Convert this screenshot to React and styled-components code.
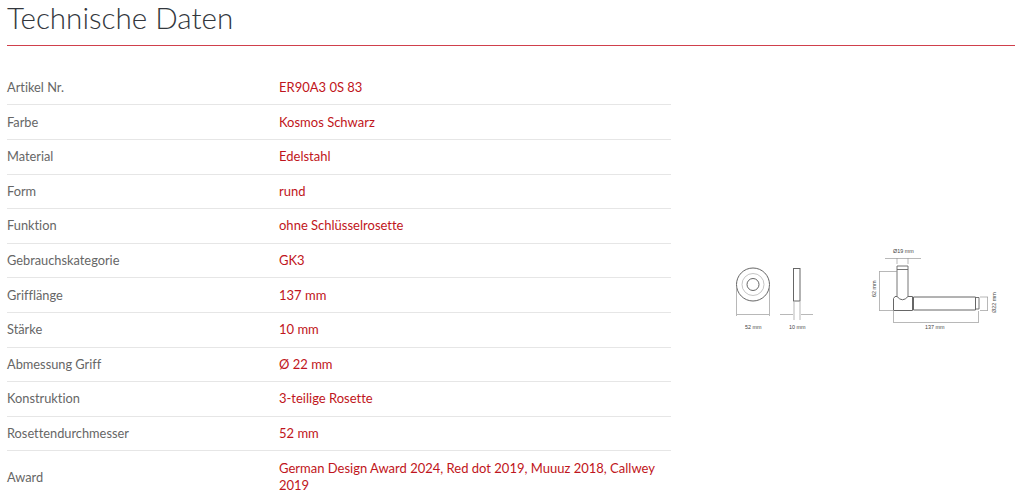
import React from 'react';
import styled, { createGlobalStyle } from 'styled-components';

const GlobalStyle = createGlobalStyle`
  html, body {
    margin: 0;
    padding: 0;
    background: #fff;
    font-family: Lato, "Open Sans", sans-serif;
    font-variant-ligatures: none;
  }
`;

const Page = styled.div`
  height: 499px;
  overflow: hidden;
  padding: 0 9px 0 7px;
`;

const Title = styled.div`
  height: 45px;
  font-size: 29.6px;
  font-weight: 300;
  line-height: 36px;
  color: #33373d;
`;

const Rule = styled.hr`
  margin: 0;
  border: 0;
  height: 1px;
  background: #d0404c;
`;

const Content = styled.div`
  display: flex;
  padding-top: 24.8px;
`;

const Table = styled.div`
  width: 664px;
  flex: none;
`;

const Row = styled.div`
  display: flex;
  align-items: center;
  min-height: 33.6px;
  border-bottom: ${(props) => (props.$last ? 'none' : '1px solid #e6e6e6')};
  padding: ${(props) => (props.$last ? '9px 0 8px' : '0')};
  font-size: 13px;
  line-height: 17px;
`;

const Label = styled.div`
  width: 272px;
  flex: none;
  color: #666;
  font-size: 12.8px;
`;

const Value = styled.div`
  flex: 1;
  color: #bf1520;
`;

const Drawing = styled.div`
  flex: 1;
  display: flex;
  align-items: center;
  padding-top: 8px;
`;

const specs = [
  ['Artikel Nr.', 'ER90A3 0S 83'],
  ['Farbe', 'Kosmos Schwarz'],
  ['Material', 'Edelstahl'],
  ['Form', 'rund'],
  ['Funktion', 'ohne Schlüsselrosette'],
  ['Gebrauchskategorie', 'GK3'],
  ['Grifflänge', '137 mm'],
  ['Stärke', '10 mm'],
  ['Abmessung Griff', 'Ø 22 mm'],
  ['Konstruktion', '3-teilige Rosette'],
  ['Rosettendurchmesser', '52 mm'],
  ['Award', 'German Design Award 2024, Red dot 2019, Muuuz 2018, Callwey 2019'],
];

function HandleDrawing() {
  return (
    <svg width="344" height="110" viewBox="671 230 344 110" fill="none" stroke="#666" strokeWidth="0.7">
      <circle cx="753" cy="278.5" r="16.5" strokeWidth="1" />
      <circle cx="753" cy="278.5" r="11" stroke="#aaa" />
      <circle cx="753" cy="278.5" r="6" strokeWidth="1" />
      <path d="M736.5 280V310M769.5 280V310M737 308.5H769" stroke="#999" />
      <rect x="793.5" y="262.5" width="6.5" height="32.5" strokeWidth="1" />
      <path d="M794 296V314M800 296V314M780 308.5H793M801 308.5H813" stroke="#999" />
      <path d="M885 252.5H921M897 252V258M908 252V258" stroke="#999" />
      <path d="M897 260H908M897 263.5H908M897 260V290.5M908 260V290.5" strokeWidth="0.9" />
      <path d="M893.5 304.5V292.5L895 290.5H897Q902.5 297 908 290.5H912.5V304.5Z" strokeWidth="1" />
      <path d="M913.5 291H975.5V304H913.5Z" strokeWidth="1" />
      <path d="M975.5 291.5H979V303H975.5" strokeWidth="0.9" />
      <path d="M879.5 265.5V304.5M879 265.5H897M879 304.5H894" stroke="#999" />
      <path d="M893.5 305V317M978.5 305V317M894 316.5H978" stroke="#999" />
      <path d="M980 291H988M980 304.5H988M987.5 291V304.5" stroke="#999" />
      <g fill="#444" stroke="none" fontFamily="'Liberation Sans', sans-serif" fontSize="5.4">
        <text x="745" y="323">52 mm</text>
        <text x="789" y="323">10 mm</text>
        <text x="893" y="247">Ø19 mm</text>
        <text x="925" y="322.5">137 mm</text>
        <text transform="translate(876 291) rotate(-90)">62 mm</text>
        <text transform="translate(996 307) rotate(-90)">Ø22 mm</text>
      </g>
    </svg>
  );
}

export default function App() {
  return (
    <Page>
      <GlobalStyle />
      <Title>Technische Daten</Title>
      <Rule />
      <Content>
        <Table>
          {specs.map(([label, value], i) => (
            <Row key={label} $last={i === specs.length - 1}>
              <Label>{label}</Label>
              <Value>{value}</Value>
            </Row>
          ))}
        </Table>
        <Drawing>
          <HandleDrawing />
        </Drawing>
      </Content>
    </Page>
  );
}
